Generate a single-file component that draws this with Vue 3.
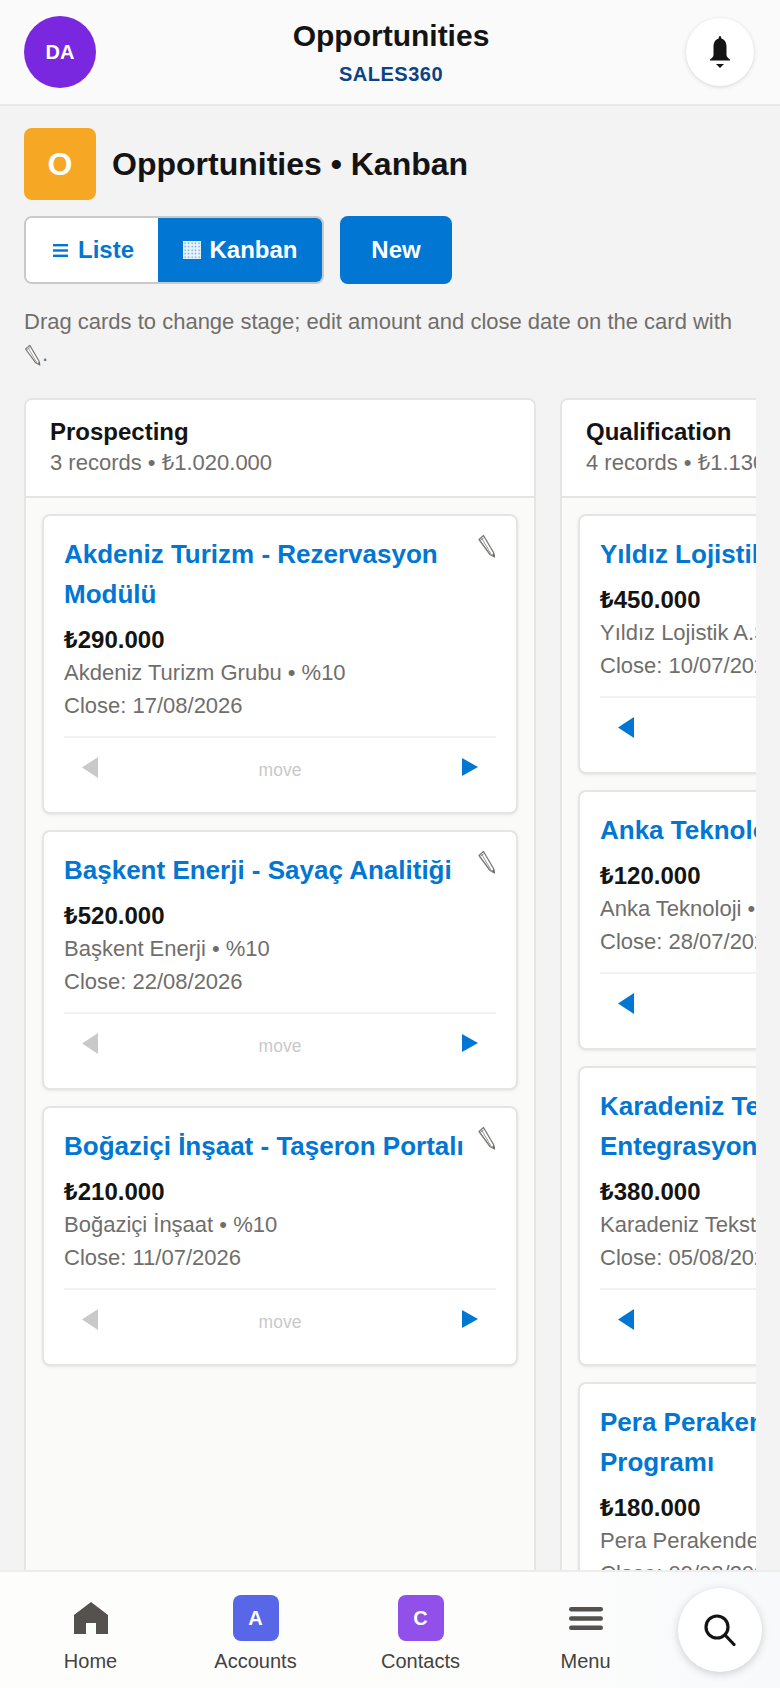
<template>
  <div class="app">
    <header class="topbar">
      <div class="avatar">DA</div>
      <div class="topbar__title">
        <h1>Opportunities</h1>
        <span>SALES360</span>
      </div>
      <button type="button" class="bell" aria-label="Notifications">
        <svg width="20" height="32" viewBox="0 0 20 32">
          <path fill="#141414" d="M10 0c.8 0 1.200.7 1.300 2.600C15 3.500 16.500 7 16.500 11v8c0 1.500 1.500 3 3.500 4.500v1H0v-1c2-1.500 3.500-3 3.500-4.500v-8C3.500 7 5 3.500 8.700 2.600 8.800.7 9.200 0 10 0z" />
          <path fill="#141414" d="M6 28h8l-4 4z" />
        </svg>
      </button>
    </header>

    <main class="content">
      <div class="page-head">
        <div class="page-head__icon">O</div>
        <h2>Opportunities • Kanban</h2>
      </div>

      <div class="toolbar">
        <div class="switch">
          <button type="button" class="switch__btn">
            <svg width="15" height="13" viewBox="0 0 15 13" fill="#0176d3">
              <rect width="15" height="2.400" />
              <rect y="5.300" width="15" height="2.400" />
              <rect y="10.600" width="15" height="2.400" />
            </svg>
            Liste
          </button>
          <button type="button" class="switch__btn switch__btn--active">
            <svg width="18" height="18" viewBox="0 0 18 18">
              <defs>
                <pattern id="kanban-dots" width="3.500" height="3.500" patternUnits="userSpaceOnUse">
                  <rect x="1.500" y="1.500" width="1.300" height="1.300" fill="#0176d3" opacity="0.75" />
                </pattern>
              </defs>
              <rect width="18" height="18" fill="#eaf4fc" />
              <rect width="18" height="18" fill="url(#kanban-dots)" />
            </svg>
            Kanban
          </button>
        </div>
        <button type="button" class="new-btn">New</button>
      </div>

      <p class="hint">
        Drag cards to change stage; edit amount and close date on the card with
        <span class="hint__end"><svg class="pencil pencil--inline" width="18" height="22" viewBox="0 0 18 24"><use href="#pencil-shape" /></svg>.</span>
      </p>

      <svg width="0" height="0" class="defs">
        <defs>
          <g id="pencil-shape">
            <path d="M1 5.500L5.500 1.500 15.500 18.500 16.500 23 12 20.500z" fill="#fff" stroke="#7b7977" stroke-width="1.300" stroke-linejoin="round" />
            <path d="M3.300 3.500L13.800 21.500M1.700 6.800l4.500-3.300" fill="none" stroke="#9a9896" stroke-width="1" />
            <path d="M13.800 20.800l2.300-1.200.6 3.600z" fill="#6b6967" />
          </g>
        </defs>
      </svg>

      <div class="board">
        <section v-for="col in columns" :key="col.name" class="column">
          <div class="column__head">
            <div class="column__name">{{ col.name }}</div>
            <div class="column__sub">{{ col.sub }}</div>
          </div>
          <div class="column__body">
            <article v-for="card in col.cards" :key="card.title" class="card">
              <div class="card__top">
                <a class="card__title">{{ card.title }}</a>
                <svg class="pencil" width="18" height="24" viewBox="0 0 18 24"><use href="#pencil-shape" /></svg>
              </div>
              <div class="card__amount">{{ card.amount }}</div>
              <div class="card__meta">{{ card.meta }}</div>
              <div class="card__meta">Close: {{ card.close }}</div>
              <div class="card__foot">
                <svg width="16" height="21" viewBox="0 0 16 21">
                  <path d="M16 0v21L0 10.500z" :fill="col.first ? '#c9c9c9' : '#0176d3'" />
                </svg>
                <span class="card__move">move</span>
                <svg width="16" height="18" viewBox="0 0 16 18">
                  <path d="M0 0v18l16-9z" fill="#0176d3" />
                </svg>
              </div>
            </article>
          </div>
        </section>
      </div>
    </main>

    <nav class="tabbar">
      <div class="tab">
        <div class="tab__icon">
          <svg width="34" height="32" viewBox="0 0 34 32">
            <path fill="#55514e" d="M17 0l17 13v19H22V21H12v11H0V13z" />
          </svg>
        </div>
        <span>Home</span>
      </div>
      <div class="tab">
        <div class="tab__icon tab__icon--blue">A</div>
        <span>Accounts</span>
      </div>
      <div class="tab">
        <div class="tab__icon tab__icon--purple">C</div>
        <span>Contacts</span>
      </div>
      <div class="tab">
        <div class="tab__icon">
          <svg width="34" height="23" viewBox="0 0 34 23" fill="#55514e">
            <rect width="34" height="4.500" rx="2.200" />
            <rect y="9.200" width="34" height="4.500" rx="2.200" />
            <rect y="18.500" width="34" height="4.500" rx="2.200" />
          </svg>
        </div>
        <span>Menu</span>
      </div>
      <button type="button" class="fab" aria-label="Search">
        <svg width="32" height="32" viewBox="0 0 32 32" fill="none" stroke="#141414" stroke-width="3.200" stroke-linecap="round">
          <circle cx="13" cy="13" r="11" />
          <path d="M21 21l9 9.500" />
        </svg>
      </button>
    </nav>
  </div>
</template>

<script setup>
const columns = [
  {
    name: 'Prospecting',
    sub: '3 records • ₺1.020.000',
    first: true,
    cards: [
      { title: 'Akdeniz Turizm - Rezervasyon Modülü', amount: '₺290.000', meta: 'Akdeniz Turizm Grubu • %10', close: '17/08/2026' },
      { title: 'Başkent Enerji - Sayaç Analitiği', amount: '₺520.000', meta: 'Başkent Enerji • %10', close: '22/08/2026' },
      { title: 'Boğaziçi İnşaat - Taşeron Portalı', amount: '₺210.000', meta: 'Boğaziçi İnşaat • %10', close: '11/07/2026' },
    ],
  },
  {
    name: 'Qualification',
    sub: '4 records • ₺1.130.000',
    first: false,
    cards: [
      { title: 'Yıldız Lojistik - Filo', amount: '₺450.000', meta: 'Yıldız Lojistik A.Ş. • %25', close: '10/07/2026' },
      { title: 'Anka Teknoloji - CRM', amount: '₺120.000', meta: 'Anka Teknoloji • %25', close: '28/07/2026' },
      { title: 'Karadeniz Tekstil - ERP Entegrasyonu', amount: '₺380.000', meta: 'Karadeniz Tekstil • %25', close: '05/08/2026' },
      { title: 'Pera Perakende - Sadakat Programı', amount: '₺180.000', meta: 'Pera Perakende • %25', close: '09/08/2026' },
    ],
  },
]
</script>

<style>
html, body { margin: 0; }
</style>

<style scoped>
.app {
  position: relative;
  display: flex;
  flex-direction: column;
  height: 1688px;
  overflow: hidden;
  background: #f3f3f3;
  font-family: "Liberation Sans", "Noto Sans", "DejaVu Sans", sans-serif;
  color: #141414;
}

.topbar {
  flex: none;
  display: flex;
  align-items: center;
  justify-content: space-between;
  height: 104px;
  padding: 0 26px 0 24px;
  background: #fafafa;
  border-bottom: 2px solid #e8e8e8;
}

.avatar {
  display: flex;
  align-items: center;
  justify-content: center;
  width: 72px;
  height: 72px;
  border-radius: 50%;
  background: #7a28e0;
  color: #fff;
  font-size: 20px;
  font-weight: 700;
}

.topbar__title {
  text-align: center;
}

.topbar__title h1 {
  margin: 0;
  font-size: 30px;
  line-height: 36px;
  font-weight: 700;
}

.topbar__title span {
  display: block;
  margin-top: 8px;
  font-size: 20px;
  line-height: 24px;
  font-weight: 700;
  letter-spacing: 0.5px;
  color: #0b4387;
}

.bell {
  display: flex;
  align-items: center;
  justify-content: center;
  width: 68px;
  height: 68px;
  padding: 0;
  border: none;
  border-radius: 50%;
  background: #fff;
  box-shadow: 0 1px 4px rgba(0, 0, 0, 0.14);
}

.content {
  flex: 1;
  min-height: 0;
  display: flex;
  flex-direction: column;
  padding: 22px 24px 0;
}

.page-head {
  display: flex;
  align-items: center;
  gap: 16px;
}

.page-head__icon {
  display: flex;
  align-items: center;
  justify-content: center;
  width: 72px;
  height: 72px;
  border-radius: 8px;
  background: #f6a723;
  color: #fff;
  font-size: 32px;
  font-weight: 700;
}

.page-head h2 {
  margin: 0;
  font-size: 32px;
  font-weight: 700;
}

.toolbar {
  display: flex;
  gap: 16px;
  margin-top: 16px;
}

.switch {
  display: flex;
  height: 68px;
  box-sizing: border-box;
  border: 2px solid #c9c9c9;
  border-radius: 8px;
  overflow: hidden;
  background: #fff;
}

.switch__btn {
  display: flex;
  align-items: center;
  justify-content: center;
  gap: 10px;
  padding: 0 0 0 3px;
  width: 132px;
  border: none;
  background: #fff;
  color: #0176d3;
  font: 700 24px "Liberation Sans", "Noto Sans", sans-serif;
}

.switch__btn--active {
  width: 164px;
  gap: 8px;
  padding-left: 1px;
  background: #0176d3;
  color: #fff;
}

.new-btn {
  width: 112px;
  height: 68px;
  padding: 0;
  border: none;
  border-radius: 8px;
  background: #0176d3;
  color: #fff;
  font: 700 24px "Liberation Sans", "Noto Sans", sans-serif;
}

.hint {
  margin: 22px 0 0;
  font-size: 22px;
  line-height: 32px;
  color: #706e6b;
}

.hint__end {
  white-space: nowrap;
}

.pencil {
  flex: none;
  margin-top: 0;
}

.pencil--inline {
  vertical-align: -5px;
}

.defs {
  position: absolute;
}

.board {
  flex: 1;
  min-height: 0;
  display: flex;
  gap: 24px;
  margin-top: 28px;
  overflow: hidden;
}

.column {
  flex: none;
  width: 512px;
  box-sizing: border-box;
  display: flex;
  flex-direction: column;
  border: 2px solid #e5e5e5;
  border-bottom: none;
  border-radius: 8px 8px 0 0;
  background: #fafaf9;
}

.column__head {
  flex: none;
  height: 98px;
  box-sizing: border-box;
  padding: 17px 24px 0;
  background: #fff;
  border-bottom: 2px solid #e5e5e5;
  border-radius: 6px 6px 0 0;
}

.column__name {
  font-size: 24px;
  line-height: 30px;
  font-weight: 700;
}

.column__sub {
  margin-top: 2px;
  font-size: 22px;
  line-height: 28px;
  color: #706e6b;
}

.column__body {
  flex: 1;
  display: flex;
  flex-direction: column;
  gap: 16px;
  padding: 16px;
}

.card {
  flex: none;
  box-sizing: border-box;
  padding: 18px 20px;
  background: #fff;
  border: 2px solid #e5e5e5;
  border-radius: 8px;
  box-shadow: 0 1px 3px rgba(0, 0, 0, 0.08);
}

.card__top {
  display: flex;
  justify-content: space-between;
  gap: 8px;
}

.card__title {
  font-size: 26px;
  line-height: 40px;
  font-weight: 700;
  color: #0176d3;
}

.card__amount {
  margin-top: 10px;
  font-size: 24px;
  line-height: 32px;
  font-weight: 700;
}

.card__meta {
  margin-top: 1px;
  font-size: 22px;
  line-height: 32px;
  color: #706e6b;
}

.card__foot {
  display: flex;
  align-items: center;
  justify-content: space-between;
  margin-top: 14px;
  padding: 2px 18px 0;
  height: 58px;
  box-sizing: border-box;
  border-top: 2px solid #f3f3f3;
}

.card__move {
  margin-top: 6px;
  font-size: 17.500px;
  color: #c9c9c9;
}

.tabbar {
  flex: none;
  display: grid;
  grid-template-columns: repeat(4, 1fr);
  box-sizing: border-box;
  height: 118px;
  padding: 23px 112px 0 8px;
  position: relative;
  background: linear-gradient(90deg, #fdfdfb 65%, #f7f9fb);
  border-top: 2px solid #ededed;
}

.tab {
  display: flex;
  flex-direction: column;
  align-items: center;
  gap: 9px;
  color: #444240;
  font-size: 20px;
}

.tab__icon {
  display: flex;
  align-items: center;
  justify-content: center;
  width: 46px;
  height: 46px;
  border-radius: 8px;
  color: #fff;
  font-size: 20px;
  font-weight: 700;
}

.tab__icon--blue { background: #5867e8; }
.tab__icon--purple { background: #9050e9; }

.fab {
  position: absolute;
  top: 16px;
  right: 18px;
  display: flex;
  align-items: center;
  justify-content: center;
  width: 84px;
  height: 84px;
  padding: 0;
  border: none;
  border-radius: 50%;
  background: #fff;
  box-shadow: 0 2px 8px rgba(0, 0, 0, 0.18);
}
</style>
